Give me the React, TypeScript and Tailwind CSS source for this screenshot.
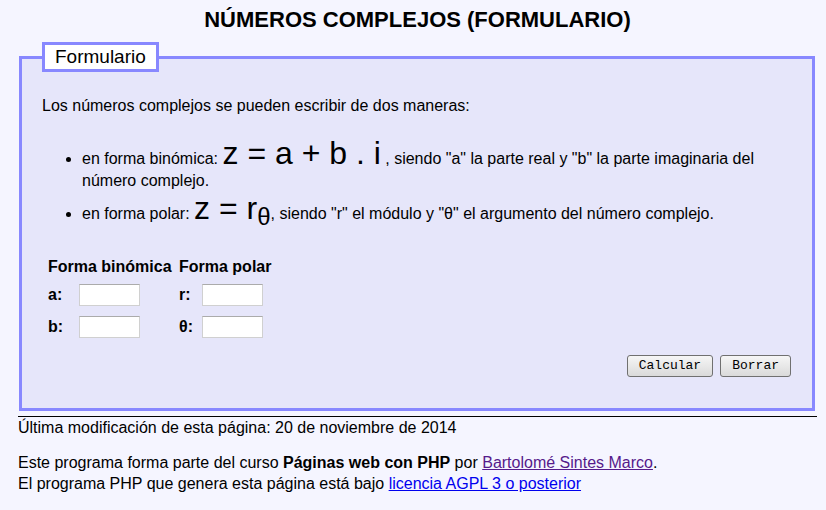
export default function App() {
  return (
    <div className="min-h-screen bg-[#f5f5ff] font-['Liberation_Sans',Arial,sans-serif] text-[16px] leading-[normal] text-black">
      <div className="pl-[18px] pr-[9px]">
        <h1 className="pt-[7px] text-center text-[22px] font-bold leading-[25px]">
          NÚMEROS COMPLEJOS (FORMULARIO)
        </h1>

        <fieldset className="mt-[10px] ml-px mr-[2px] border-[3px] border-[#8888ff] bg-[#e6e6fa] pl-[20px] pr-[20px] pb-[31px]">
          <legend className="border-[3px] border-[#8888ff] bg-white px-[10px] text-[19px] leading-[24px]">
            Formulario
          </legend>

          <p className="mt-[25px]">Los números complejos se pueden escribir de dos maneras:</p>

          <ul className="mt-[20px] list-disc pl-[40px]">
            <li>
              en forma binómica: <span className="text-[32px]">z = a + b . i</span> , siendo "a" la parte real y "b" la
              parte imaginaria del número complejo.
            </li>
            <li>
              en forma polar:{" "}
              <span className="text-[32px]">
                z = r<sub>θ</sub>
              </span>
              , siendo "r" el módulo y "θ" el argumento del número complejo.
            </li>
          </ul>

          <div className="mt-[30px] ml-[6px] grid grid-cols-[31px_100px_23px_80px] whitespace-nowrap font-bold">
            <div className="col-span-2 h-[20px] leading-[20px]">Forma binómica</div>
            <div className="col-span-2 h-[20px] leading-[20px]">Forma polar</div>

            <div className="mt-[7px] flex h-[22px] items-center">a:</div>
            <div className="mt-[7px]">
              <input className="h-[22px] w-[61px] border border-[#d0d0d0] border-t-[#ababab] bg-white" />
            </div>
            <div className="mt-[7px] flex h-[22px] items-center">r:</div>
            <div className="mt-[7px]">
              <input className="h-[22px] w-[61px] border border-[#d0d0d0] border-t-[#ababab] bg-white" />
            </div>

            <div className="mt-[10px] flex h-[22px] items-center">b:</div>
            <div className="mt-[10px]">
              <input className="h-[22px] w-[61px] border border-[#d0d0d0] border-t-[#ababab] bg-white" />
            </div>
            <div className="mt-[10px] flex h-[22px] items-center">θ:</div>
            <div className="mt-[10px]">
              <input className="h-[22px] w-[61px] border border-[#d0d0d0] border-t-[#ababab] bg-white" />
            </div>
          </div>

          <div className="mt-[17px] mr-px flex justify-end gap-[7px]">
            {["Calcular", "Borrar"].map((label) => (
              <button
                key={label}
                className="h-[22px] rounded-[3px] border border-[#707070] bg-gradient-to-b from-[#f6f6f6] to-[#dadada] px-[11px] font-['Liberation_Mono','Courier_New',monospace] text-[13px] leading-[20px] text-black"
              >
                {label}
              </button>
            ))}
          </div>
        </fieldset>

        <hr className="mt-[5px] border-t border-black" />

        <p className="leading-[21px]">Última modificación de esta página: 20 de noviembre de 2014</p>

        <p className="mt-[14px] leading-[21px]">
          Este programa forma parte del curso <strong>Páginas web con PHP</strong> por{" "}
          <a href="#" className="text-[#551a8b] underline">
            Bartolomé Sintes Marco
          </a>
          .
          <br />
          El programa PHP que genera esta página está bajo{" "}
          <a href="#" className="text-[#0000ee] underline">
            licencia AGPL 3 o posterior
          </a>
        </p>
      </div>
    </div>
  );
}
